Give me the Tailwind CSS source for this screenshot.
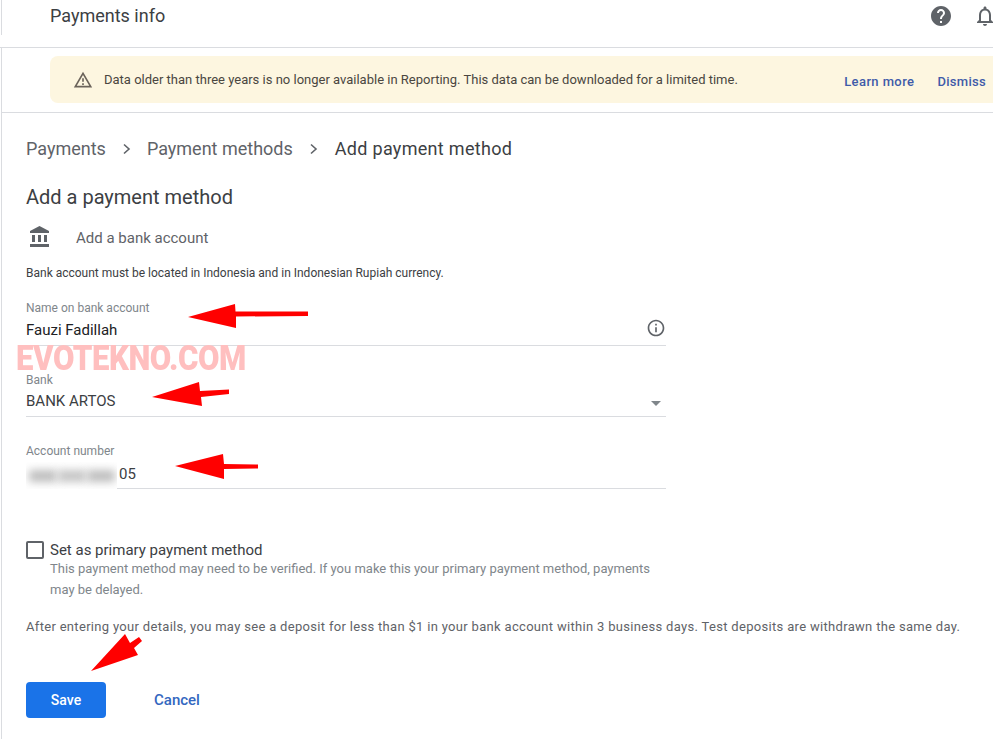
<!DOCTYPE html>
<html lang="en">
<head>
  <meta charset="UTF-8" />
  <title>Payments info</title>
  <script src="https://cdn.jsdelivr.net/npm/@tailwindcss/browser@4"></script>
</head>
<body class="bg-white font-['Roboto',sans-serif] text-[#3c4043]">
<div class="relative w-[993px] h-[739px] overflow-hidden bg-white">

  <!-- Header -->
  <header class="h-[48px] border-b border-[#dadce0] flex items-start">
    <div class="h-[35px] w-[49px] ml-px border-l border-[#dadce0] shrink-0"></div>
    <h1 class="text-[18px] leading-[32px] text-[#3c4043]">Payments info</h1>
    <div class="ml-auto flex gap-5 pt-1 -mr-1 text-[#5f6368]">
      <svg class="w-6 h-6 shrink-0" viewBox="0 0 24 24" fill="currentColor"><path d="M12 2C6.48 2 2 6.48 2 12s4.48 10 10 10 10-4.48 10-10S17.52 2 12 2zm1 17h-2v-2h2v2zm2.07-7.75l-.9.92C13.45 12.9 13 13.5 13 15h-2v-.5c0-1.1.45-2.1 1.17-2.83l1.24-1.26c.37-.36.59-.86.59-1.41 0-1.1-.9-2-2-2s-2 .9-2 2H8c0-2.21 1.79-4 4-4s4 1.79 4 4c0 .88-.36 1.68-.93 2.25z"/></svg>
      <svg class="w-6 h-6 shrink-0" viewBox="0 0 24 24" fill="currentColor"><path d="M12 22c1.1 0 2-.9 2-2h-4c0 1.1.9 2 2 2zm6-6v-5c0-3.07-1.64-5.64-4.5-6.32V4c0-.83-.67-1.5-1.5-1.5s-1.5.67-1.5 1.5v.68C7.63 5.36 6 7.92 6 11v5l-2 2v1h16v-1l-2-2zm-2 1H8v-6c0-2.48 1.51-4.5 4-4.5s4 2.02 4 4.5v6z"/></svg>
    </div>
  </header>

  <div class="ml-px border-l border-[#dadce0] h-[691px]">
    <!-- Notice -->
    <section class="h-[65px] border-b border-[#dadce0] pt-2 pl-[48px]">
      <div class="h-[47px] bg-[#fdf6e0] rounded-l-lg flex items-center pl-[23px] pr-[7px]">
        <svg class="w-5 h-5 shrink-0" viewBox="0 0 24 24" fill="#6b635a"><path d="M1 21h22L12 2 1 21zm3.47-2L12 5.99 19.53 19H4.47zM11 16h2v2h-2zm0-6h2v4h-2z"/></svg>
        <p class="ml-[11px] mt-[1px] text-[13px] leading-5 text-[#4a4640]">Data older than three years is no longer available in Reporting. This data can be downloaded for a limited time.</p>
        <a class="ml-auto mt-[5px] text-[13px] font-medium tracking-[0.4px] leading-5 text-[#3f5ba9]">Learn more</a>
        <a class="ml-[23px] mt-[5px] text-[13px] font-medium tracking-[0.3px] leading-5 text-[#3f5ba9]">Dismiss</a>
      </div>
    </section>

    <main class="pl-[24px]">
      <!-- Breadcrumb -->
      <nav class="mt-6 h-6 flex items-center text-[18px] leading-6 text-[#5f6368]">
        <span>Payments</span>
        <svg class="w-[10px] h-[12px] ml-[16px] mr-[15px]" viewBox="0 0 10 12" fill="none" stroke="#5f6368" stroke-width="1.6"><path d="M2 1.5 7 6l-5 4.5"/></svg>
        <span>Payment methods</span>
        <svg class="w-[10px] h-[12px] ml-[16px] mr-[16px]" viewBox="0 0 10 12" fill="none" stroke="#5f6368" stroke-width="1.6"><path d="M2 1.5 7 6l-5 4.5"/></svg>
        <span class="text-[#3c4043] tracking-[0.3px]">Add payment method</span>
      </nav>

      <h2 class="mt-6 text-[20px] leading-6 text-[#3c4043]">Add a payment method</h2>

      <div class="mt-[16px] h-6 flex items-center">
        <svg class="w-6 h-6 ml-[2px] shrink-0" viewBox="0 0 24 24" fill="#5f6368"><path d="M4 10v7h3v-7H4zm6 0v7h3v-7h-3zM2 22h19v-3H2v3zm14-12v7h3v-7h-3zm-4.500-9L2 6v2h19V6l-9.500-5z"/></svg>
        <span class="ml-[24px] mt-[1px] text-[15px] leading-5 text-[#5f6368]">Add a bank account</span>
      </div>

      <p class="mt-[16px] text-[12px] leading-4 text-[#3c4043]">Bank account must be located in Indonesia and in Indonesian Rupiah currency.</p>

      <!-- Form -->
      <form class="w-[640px]">
        <div class="mt-[20px] border-b border-[#dadce0] pb-[5px]">
          <label class="block text-[12px] leading-[14px] text-[#80868b]">Name on bank account</label>
          <div class="mt-[5px] flex items-center h-5 text-[15px] leading-5 text-[#202124]">
            <span>Fauzi Fadillah</span>
            <svg class="ml-auto w-5 h-5 -mt-[4px]" viewBox="0 0 24 24" fill="#5f6368"><path d="M11 7h2v2h-2zm0 4h2v6h-2zm1-9C6.480 2 2 6.480 2 12s4.480 10 10 10 10-4.480 10-10S17.520 2 12 2zm0 18c-4.410 0-8-3.590-8-8s3.590-8 8-8 8 3.590 8 8-3.590 8-8 8z"/></svg>
          </div>
        </div>

        <div class="mt-[27px] border-b border-[#dadce0] pb-[5px]">
          <label class="block text-[12px] leading-[14px] text-[#80868b]">Bank</label>
          <div class="mt-[4px] flex items-center h-5 text-[15px] leading-5 text-[#3c4043]">
            <span>BANK ARTOS</span>
            <span class="ml-auto mr-[5px] mt-[4px] w-0 h-0 border-x-[5px] border-x-transparent border-t-[5px] border-t-[#80868b]"></span>
          </div>
        </div>

        <div class="mt-[27px] border-b border-[#dadce0] pb-[4px] relative">
          <label class="block text-[12px] leading-[14px] text-[#80868b]">Account number</label>
          <div class="mt-[6px] flex items-center h-5 text-[15px] leading-5 text-[#3c4043]">
            <span class="w-[93px]"></span>
            <span>05</span>
          </div>
          <!-- blurred out digits -->
          <div class="absolute left-0 top-[18px] w-[91px] h-[27px] bg-white overflow-hidden flex items-center gap-[1px] pl-[3px]">
            <span class="w-[28px] h-[12px] bg-[#bdbdbd] blur-[4px]"></span>
            <span class="w-[28px] h-[12px] bg-[#c4c4c4] blur-[4px]"></span>
            <span class="w-[28px] h-[12px] bg-[#bdbdbd] blur-[4px]"></span>
          </div>
        </div>

        <div class="mt-[51px] flex">
          <span class="w-[18px] h-[18px] mt-px border-2 border-[#5f6368] rounded-[2px] shrink-0"></span>
          <div class="ml-[6px]">
            <label class="block text-[15px] leading-5 text-[#3c4043]">Set as primary payment method</label>
            <p class="-mt-[2px] text-[13px] leading-[21px] text-[#80868b] w-[610px]">This payment method may need to be verified. If you make this your primary payment method, payments may be delayed.</p>
          </div>
        </div>
      </form>

      <p class="mt-[17px] text-[13px] leading-5 tracking-[0.315px] text-[#5f6368]">After entering your details, you may see a deposit for less than $1 in your bank account within 3 business days. Test deposits are withdrawn the same day.</p>

      <div class="mt-[45px] flex items-center">
        <button type="button" class="w-[80px] h-[36px] rounded bg-[#1a73e8] text-white text-[14px] font-medium">Save</button>
        <button type="button" class="ml-[48px] text-[15px] font-medium text-[#3367c0]">Cancel</button>
      </div>
    </main>
  </div>

  <!-- Screenshot annotations -->
  <span class="absolute left-[16px] top-[339px] origin-left scale-x-[0.89] text-[35px] leading-[40px] font-black text-[#ffbfbf] tracking-[-0.5px]">EVOTEKNO.COM</span>
  <svg class="absolute left-0 top-0 pointer-events-none" width="993" height="739" viewBox="0 0 993 739" fill="#f00">
    <path d="M188 317 235 304 235.500 311.500 308 311.500 308 316 236 316.500 236 328z"/>
    <path d="M152 397 199 382 200 391 229 389.500 229 394 201 397 202 406z"/>
    <path d="M175 466 223 454 224 464 258 464.500 258 468.500 224 469 224 479z"/>
    <path d="M91 671 125 634 130 643 139 637 142 641 134 648 138 655z"/>
  </svg>
</div>
</body>
</html>
